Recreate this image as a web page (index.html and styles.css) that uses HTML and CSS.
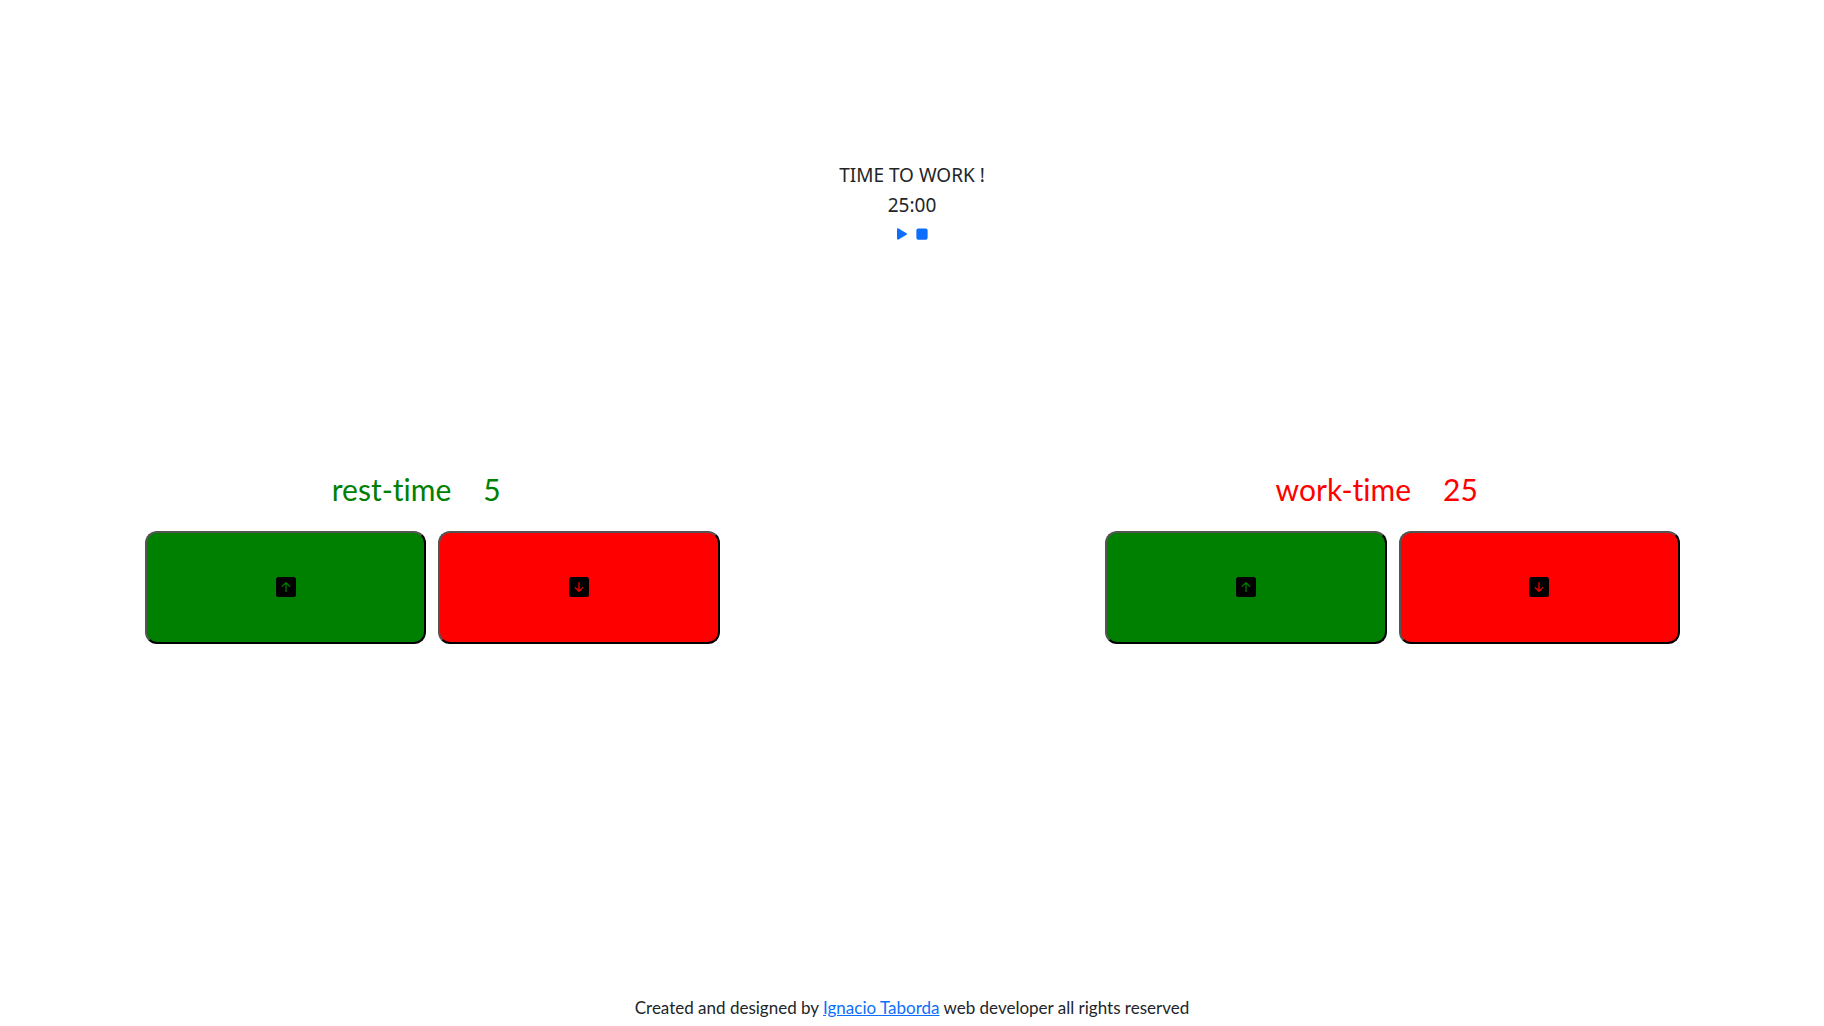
FILE: index.html
```html
<!DOCTYPE html>
<html lang="en">
<head>
<meta charset="utf-8">
<meta name="viewport" content="width=device-width, initial-scale=1">
<title>Pomodoro timer</title>
<link rel="stylesheet" href="styles.css">
</head>
<body>
<main class="page">
  <section class="timer">
    <h1 class="timer-title">TIME TO WORK !</h1>
    <p class="timer-clock">25:00</p>
    <div class="timer-actions">
      <button class="action" type="button" aria-label="Start"><svg viewBox="0 0 16 16" aria-hidden="true"><path d="m11.596 8.697-6.363 3.692c-.54.313-1.233-.066-1.233-.697V4.308c0-.63.692-1.01 1.233-.696l6.363 3.692a.802.802 0 0 1 0 1.393z"/></svg></button>
      <button class="action" type="button" aria-label="Stop"><svg viewBox="0 0 16 16" aria-hidden="true"><path d="M5 3.500h6A1.500 1.500 0 0 1 12.500 5v6a1.500 1.500 0 0 1-1.500 1.500H5A1.500 1.500 0 0 1 3.500 11V5A1.500 1.500 0 0 1 5 3.500z"/></svg></button>
    </div>
  </section>
  <div class="settings">
    <section class="setting">
      <h2 class="setting-title rest"><span>rest-time</span><span>5</span></h2>
      <div class="setting-buttons">
        <button class="step up" type="button" aria-label="Increase rest time"><svg viewBox="0 0 16 16" aria-hidden="true"><path d="M2 16a2 2 0 0 1-2-2V2a2 2 0 0 1 2-2h12a2 2 0 0 1 2 2v12a2 2 0 0 1-2 2H2zm6.500-4.500V5.707l2.146 2.147a.5.5 0 0 0 .708-.708l-3-3a.5.5 0 0 0-.708 0l-3 3a.5.5 0 1 0 .708.708L7.500 5.707V11.500a.5.5 0 0 0 1 0z"/></svg></button>
        <button class="step down" type="button" aria-label="Decrease rest time"><svg viewBox="0 0 16 16" aria-hidden="true"><path d="M2 0a2 2 0 0 0-2 2v12a2 2 0 0 0 2 2h12a2 2 0 0 0 2-2V2a2 2 0 0 0-2-2H2zm6.500 4.500v5.793l2.146-2.147a.5.5 0 0 1 .708.708l-3 3a.5.5 0 0 1-.708 0l-3-3a.5.5 0 1 1 .708-.708L7.500 10.293V4.500a.5.5 0 0 1 1 0z"/></svg></button>
      </div>
    </section>
    <section class="setting">
      <h2 class="setting-title work"><span>work-time</span><span>25</span></h2>
      <div class="setting-buttons">
        <button class="step up" type="button" aria-label="Increase work time"><svg viewBox="0 0 16 16" aria-hidden="true"><path d="M2 16a2 2 0 0 1-2-2V2a2 2 0 0 1 2-2h12a2 2 0 0 1 2 2v12a2 2 0 0 1-2 2H2zm6.500-4.500V5.707l2.146 2.147a.5.5 0 0 0 .708-.708l-3-3a.5.5 0 0 0-.708 0l-3 3a.5.5 0 1 0 .708.708L7.500 5.707V11.500a.5.5 0 0 0 1 0z"/></svg></button>
        <button class="step down" type="button" aria-label="Decrease work time"><svg viewBox="0 0 16 16" aria-hidden="true"><path d="M2 0a2 2 0 0 0-2 2v12a2 2 0 0 0 2 2h12a2 2 0 0 0 2-2V2a2 2 0 0 0-2-2H2zm6.500 4.500v5.793l2.146-2.147a.5.5 0 0 1 .708.708l-3 3a.5.5 0 0 1-.708 0l-3-3a.5.5 0 1 1 .708-.708L7.500 10.293V4.500a.5.5 0 0 1 1 0z"/></svg></button>
      </div>
    </section>
  </div>
  <footer class="footer">Created and designed by <a href="#">Ignacio Taborda</a> web developer all rights reserved</footer>
</main>
</body>
</html>
```
FILE: styles.css
```css
* { box-sizing: border-box; }

body {
  margin: 0;
  background: #fff;
  color: #212529;
  font-family: Lato, "Open Sans", sans-serif;
  font-size: 17px;
  font-variant-ligatures: none;
  line-height: 24px;
}

.page {
  display: flex;
  flex-direction: column;
  min-height: 100vh;
}

.timer {
  padding-top: 160px;
  text-align: center;
}

.timer-title,
.timer-clock {
  margin: 0;
  font-family: "Noto Sans", sans-serif;
  font-size: 19px;
  font-weight: 400;
  line-height: 30px;
}

.timer-actions {
  display: flex;
  justify-content: center;
  line-height: 0;
}

.action {
  padding: 4px 0;
  border: 0;
  background: none;
  color: #0d6efd;
}

.action svg {
  width: 20px;
  height: 20px;
  fill: currentColor;
}

.settings {
  display: flex;
  justify-content: space-between;
  padding: 0 144px 0 145px;
  margin-top: 220px;
}

.setting { width: 31.5vw; }

.setting-title {
  display: flex;
  justify-content: center;
  gap: 32px;
  margin: 0 0 24px;
  padding-right: 32px;
  font-size: 30px;
  font-weight: 400;
  line-height: 36px;
}

.rest { color: green; }
.work { color: red; }

.setting-buttons {
  display: flex;
  gap: 12px;
}

.step {
  display: flex;
  flex: 1;
  align-items: center;
  justify-content: center;
  height: 11vh;
  padding: 0;
  border: 2px outset #000;
  border-radius: 12px;
  color: #000;
}

.step svg {
  width: 20px;
  height: 20px;
  fill: currentColor;
}

.up { background: green; }
.down { background: red; }

.footer {
  margin-top: auto;
  padding-bottom: 6px;
  text-align: center;
}

.footer a { color: #0d6efd; }
```
